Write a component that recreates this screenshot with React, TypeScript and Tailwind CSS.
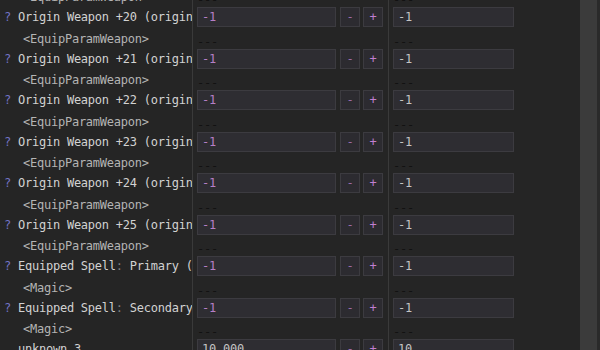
import React from "react";

type Row = {
  label: string;
  help: boolean;
  sub: string;
  v1: string;
  v2: string;
  purple: boolean;
  colon?: boolean;
};

const rows: Row[] = [
  { label: "Origin Weapon +19 (originWeapon19)", help: true, sub: "<EquipParamWeapon>", v1: "-1", v2: "-1", purple: true },
  { label: "Origin Weapon +20 (originWeapon20)", help: true, sub: "<EquipParamWeapon>", v1: "-1", v2: "-1", purple: true },
  { label: "Origin Weapon +21 (originWeapon21)", help: true, sub: "<EquipParamWeapon>", v1: "-1", v2: "-1", purple: true },
  { label: "Origin Weapon +22 (originWeapon22)", help: true, sub: "<EquipParamWeapon>", v1: "-1", v2: "-1", purple: true },
  { label: "Origin Weapon +23 (originWeapon23)", help: true, sub: "<EquipParamWeapon>", v1: "-1", v2: "-1", purple: true },
  { label: "Origin Weapon +24 (originWeapon24)", help: true, sub: "<EquipParamWeapon>", v1: "-1", v2: "-1", purple: true },
  { label: "Origin Weapon +25 (originWeapon25)", help: true, sub: "<EquipParamWeapon>", v1: "-1", v2: "-1", purple: true },
  { label: "Equipped Spell| Primary (equippedSpell1)", help: true, sub: "<Magic>", v1: "-1", v2: "-1", purple: true, colon: true },
  { label: "Equipped Spell| Secondary (equippedSpell2)", help: true, sub: "<Magic>", v1: "-1", v2: "-1", purple: true, colon: true },
  { label: "unknown 3", help: false, sub: "", v1: "10,000", v2: "10", purple: false },
];

function Label({ r }: { r: Row }) {
  if (r.colon) {
    const [a, b] = r.label.split("|");
    return (
      <span className="whitespace-pre text-[#d2d2d2]">
        {a}
        <span className="text-[#7d7d7d]">:</span>
        {b}
      </span>
    );
  }
  return <span className="whitespace-pre text-[#d2d2d2]">{r.label}</span>;
}

function Field({ value, purple, w }: { value: string; purple: boolean; w: string }) {
  return (
    <div
      className={`${w} h-[20px] shrink-0 bg-[#2e2d32] border border-[#3c3b40] flex items-center pl-[4px] ${
        purple ? "text-[#b67fc6]" : "text-[#c4c4c4]"
      }`}
    >
      {value}
    </div>
  );
}

function Btn({ ch, bright }: { ch: string; bright?: boolean }) {
  return (
    <div
      className={`w-[20px] h-[20px] shrink-0 bg-[#2c2b30] border border-[#3c3b40] flex items-center justify-center ${
        bright ? "text-[#c27fd2]" : "text-[#9a6aa8]"
      }`}
    >
      {ch}
    </div>
  );
}

export default function App() {
  return (
    <div
      className="w-[600px] h-[350px] overflow-hidden bg-[#252525] flex text-[12px] tracking-[-0.24px] leading-none"
      style={{ fontFamily: '"DejaVu Sans Mono", "Liberation Mono", monospace' }}
    >
      <div className="w-[580px] h-[350px] overflow-hidden">
        <div className="flex flex-col -mt-[34.5px]">
          {rows.map((r, i) => (
            <div key={i} className="flex h-[41.5px] shrink-0">
              <div className="w-[193px] shrink-0 border-r border-[#3a3a3a] overflow-hidden flex flex-col">
                <div className="h-[20px] flex items-center">
                  {r.help ? (
                    <span className="w-[18px] pl-[4px] shrink-0 text-[#7373c4]">?</span>
                  ) : (
                    <span className="w-[18px] shrink-0" />
                  )}
                  <Label r={r} />
                </div>
                <div className="mt-[4px] h-[15px] flex items-center pl-[23px] text-[#b4b4b4] whitespace-pre">
                  {r.sub}
                </div>
              </div>
              <div className="w-[196px] shrink-0 border-r border-[#3a3a3a] flex flex-col pl-[4px]">
                <div className="h-[20px] flex items-center">
                  <Field value={r.v1} purple={r.purple} w="w-[139px]" />
                  <div className="ml-[4px] flex gap-[3px]">
                    <Btn ch="-" />
                    <Btn ch="+" bright />
                  </div>
                </div>
                <div className="mt-[4px] h-[15px] flex items-center pt-[6px] text-[#121212]">---</div>
              </div>
              <div className="flex-1 flex flex-col pl-[4px]">
                <div className="h-[20px] flex items-center">
                  <Field value={r.v2} purple={false} w="w-[121px]" />
                </div>
                <div className="mt-[4px] h-[15px] flex items-center pt-[6px] text-[#121212]">---</div>
              </div>
            </div>
          ))}
        </div>
      </div>
      <div className="w-[20px] h-[350px] bg-[#2a2a2a] flex">
        <div className="w-[17px] h-full bg-[#3b3b3b]" />
      </div>
    </div>
  );
}
